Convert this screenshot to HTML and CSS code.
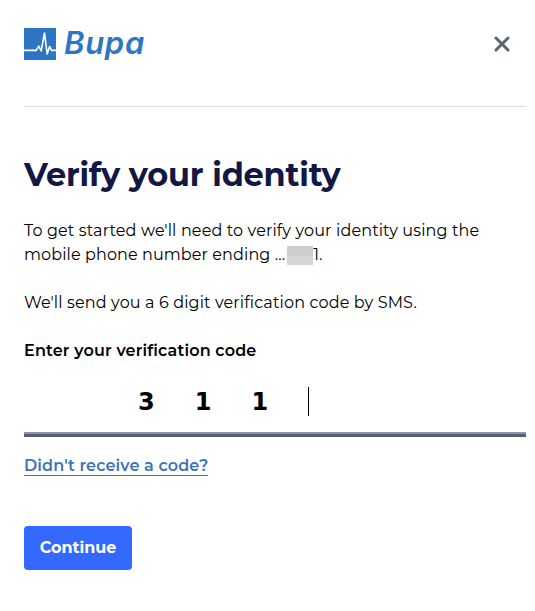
FILE: index.html
```
<!DOCTYPE html>
<html lang="en">
<head>
    <meta charset="UTF-8">
    <meta name="viewport" content="width=device-width, initial-scale=1.0">
    <title>Verify your identity</title>
    <link rel="stylesheet" href="styles.css">
</head>
<body>
    <!-- Header -->
    <header class="header">
        <div class="logo">
            <svg class="logo-mark" width="32" height="32" viewBox="0 0 32 32">
                <rect width="32" height="32" fill="#2d76c4"/>
                <path d="M0 22.4H12.2L14.8 18.2L17.2 23L20.5 5L23.2 26L25.5 18.5L27.6 22.4H32" fill="none" stroke="#fff" stroke-width="1.6" stroke-linejoin="round"/>
            </svg>
            <span class="logo-text">Bupa</span>
        </div>
        <button class="close" aria-label="Close">
            <svg width="16" height="16" viewBox="0 0 16 16">
                <path d="M2 2L14 14M14 2L2 14" stroke="#5b656d" stroke-width="3" stroke-linecap="round"/>
            </svg>
        </button>
    </header>

    <!-- Verification form -->
    <main class="verify">
        <h1>Verify your identity</h1>
        <p class="intro">To get started we'll need to verify your identity using the<br><span class="ending">mobile phone number ending ...</span><span class="masked"></span>1.</p>
        <p class="sms">We'll send you a 6 digit verification code by SMS.</p>

        <div class="label">Enter your verification code</div>
        <div class="code-input"><span class="digits">311</span><span class="caret"></span></div>

        <a href="#" class="resend">Didn't receive a code?</a>
        <button class="continue">Continue</button>
    </main>
</body>
</html>
```
FILE: styles.css
```
/* General Reset */
* {
    margin: 0;
    padding: 0;
    box-sizing: border-box;
}

body {
    background-color: #fff;
    color: #000;
    font-family: Montserrat, Inter, sans-serif;
    font-size: 16px;
    line-height: 24px;
    padding: 0 9px 0 24px;
    white-space: nowrap;
}

button {
    border: none;
    cursor: pointer;
    font-family: inherit;
}

/* Header */
.header {
    display: flex;
    justify-content: space-between;
    align-items: flex-start;
    height: 107px;
    padding-top: 28px;
    border-bottom: 1px solid #dedede;
}

.logo {
    display: flex;
    gap: 8px;
}

.logo-mark {
    display: block;
}

.logo-text {
    color: #2d76c4;
    font-family: Inter, sans-serif;
    font-size: 31px;
    font-style: italic;
    font-weight: 600;
    line-height: 30px;
    letter-spacing: 0.7px;
}

.close {
    display: flex;
    margin: 8px 16.5px 0 0;
    background: none;
}

/* Verification form */
.verify {
    display: flex;
    flex-direction: column;
    align-items: flex-start;
    padding-top: 48px;
}

h1 {
    color: #111843;
    font-size: 32px;
    font-weight: 700;
    line-height: 40px;
    letter-spacing: -0.2px;
    margin-bottom: 24px;
}

.intro,
.sms {
    margin-bottom: 24px;
    letter-spacing: 0.14px;
}

.intro {
    height: 48px;
}

.ending {
    letter-spacing: 0.1px;
}

.masked {
    display: inline-block;
    width: 26px;
    height: 19px;
    margin-left: 2px;
    vertical-align: -5px;
    background: linear-gradient(#cdcdcd 55%, #d6d6d6 55%);
}

.label {
    font-weight: 600;
    letter-spacing: 0.16px;
}

/* Code input */
.code-input {
    display: flex;
    align-items: center;
    width: 100%;
    height: 74px;
    padding: 6px 0 0 114px;
    border-bottom: 3px solid #5a5a7c;
    box-shadow: inset 0 -2px #8d98a6;
}

.digits {
    font-family: "DejaVu Sans", sans-serif;
    font-size: 24px;
    font-weight: 700;
    letter-spacing: 40.1px;
}

.caret {
    width: 1px;
    height: 29px;
    background: #000;
}

/* Actions */
.resend {
    margin-top: 18px;
    padding-top: 1px;
    color: #3d74bb;
    border-bottom: 1px solid #397a9c;
    font-weight: 600;
    line-height: 19px;
    letter-spacing: 0.13px;
    text-decoration: none;
}

.continue {
    width: 108px;
    height: 44px;
    margin-top: 50px;
    padding-bottom: 1px;
    border-radius: 4px;
    background: #3369ff;
    color: #fff;
    font-size: 16px;
    font-weight: 700;
}
```
